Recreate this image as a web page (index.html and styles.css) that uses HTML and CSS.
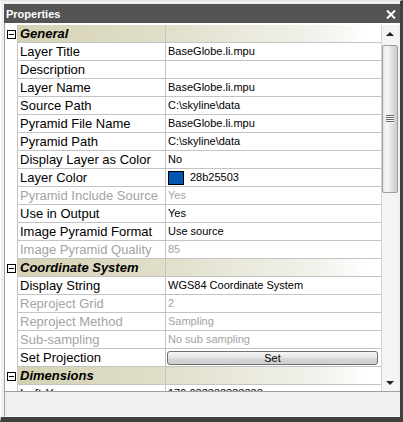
FILE: index.html
```html
<!DOCTYPE html>
<html>
<head>
<meta charset="utf-8">
<link rel="stylesheet" href="styles.css">
</head>
<body>
<div class="window">
  <div class="titlebar">
    <span class="title">Properties</span>
    <svg class="close" width="10" height="9" viewBox="0 0 10 9"><path d="M1 0.5 L9 8.5 M9 0.5 L1 8.5" stroke="#fff" stroke-width="2" fill="none"/></svg>
  </div>
  <div class="grid">
    <div class="rows">
      <div class="row cat"><div class="gutter"><span class="toggle"></span></div><div class="label">General</div><div class="value"></div></div>
      <div class="row"><div class="gutter"></div><div class="label">Layer Title</div><div class="value">BaseGlobe.li.mpu</div></div>
      <div class="row"><div class="gutter"></div><div class="label">Description</div><div class="value"></div></div>
      <div class="row"><div class="gutter"></div><div class="label">Layer Name</div><div class="value">BaseGlobe.li.mpu</div></div>
      <div class="row"><div class="gutter"></div><div class="label">Source Path</div><div class="value">C:\skyline\data</div></div>
      <div class="row"><div class="gutter"></div><div class="label">Pyramid File Name</div><div class="value">BaseGlobe.li.mpu</div></div>
      <div class="row"><div class="gutter"></div><div class="label">Pyramid Path</div><div class="value">C:\skyline\data</div></div>
      <div class="row"><div class="gutter"></div><div class="label">Display Layer as Color</div><div class="value">No</div></div>
      <div class="row"><div class="gutter"></div><div class="label">Layer Color</div><div class="value"><span class="swatch"></span>28b25503</div></div>
      <div class="row dis"><div class="gutter"></div><div class="label">Pyramid Include Source</div><div class="value">Yes</div></div>
      <div class="row"><div class="gutter"></div><div class="label">Use in Output</div><div class="value">Yes</div></div>
      <div class="row"><div class="gutter"></div><div class="label">Image Pyramid Format</div><div class="value">Use source</div></div>
      <div class="row dis"><div class="gutter"></div><div class="label">Image Pyramid Quality</div><div class="value">85</div></div>
      <div class="row cat"><div class="gutter"><span class="toggle"></span></div><div class="label">Coordinate System</div><div class="value"></div></div>
      <div class="row"><div class="gutter"></div><div class="label">Display String</div><div class="value">WGS84 Coordinate System</div></div>
      <div class="row dis"><div class="gutter"></div><div class="label">Reproject Grid</div><div class="value">2</div></div>
      <div class="row dis"><div class="gutter"></div><div class="label">Reproject Method</div><div class="value">Sampling</div></div>
      <div class="row dis"><div class="gutter"></div><div class="label">Sub-sampling</div><div class="value">No sub sampling</div></div>
      <div class="row"><div class="gutter"></div><div class="label">Set Projection</div><div class="value btncell"><span class="btn">Set</span></div></div>
      <div class="row cat"><div class="gutter"><span class="toggle"></span></div><div class="label">Dimensions</div><div class="value"></div></div>
      <div class="row"><div class="gutter"></div><div class="label">Left X</div><div class="value">179.033333333333</div></div>
    </div>
    <div class="scrollbar">
      <div class="arrow up"><span class="tri-up"></span></div>
      <div class="track"><div class="thumb"><span class="grip"></span></div></div>
      <div class="arrow down"><span class="tri-down"></span></div>
    </div>
    <div class="edge"></div>
  </div>
  <div class="desc"></div>
</div>
</body>
</html>
```

FILE: styles.css
```css
html, body {
  margin: 0;
  padding: 0;
  background: #f0f0f0;
}
.window {
  width: 403px;
  height: 422px;
  box-sizing: border-box;
  background: #f0f0f0;
  border-top: 1px solid #e4e4e4;
  border-left: 1px solid #ffffff;
  border-right: 3px solid #404040;
  border-bottom: 5px solid #404040;
  padding: 3px 0 0 3px;
  display: flex;
  flex-direction: column;
  font-family: "Liberation Sans", Arial, sans-serif;
}
.titlebar {
  height: 19px;
  flex: none;
  background: #545454;
  display: flex;
  align-items: center;
  justify-content: space-between;
  padding: 0 4px 0 2px;
}
.title {
  color: #fff;
  font-weight: bold;
  font-size: 11px;
}
.close {
  display: block;
  margin-top: 1px;
}
.grid {
  height: 369px;
  flex: none;
  box-sizing: border-box;
  border-left: 1px solid #a0a0a0;
  border-bottom: 1px solid #a0a0a0;
  padding-top: 2px;
  background: #fff;
  display: flex;
}
.rows {
  width: 376px;
  overflow: hidden;
  background: #fff;
}
.row {
  display: grid;
  grid-template-columns: 12px 148px 216px;
  height: 18px;
}
.gutter {
  background: #fff;
  display: flex;
  align-items: center;
  justify-content: center;
}
.label, .value {
  border-bottom: 1px solid #c4c4c4;
  border-left: 1px solid #c4c4c4;
  height: 17px;
  line-height: 17px;
  white-space: nowrap;
  overflow: hidden;
}
.label {
  font-size: 13px;
  color: #000;
  padding-left: 2px;
}
.value {
  font-size: 11px;
  color: #000;
  padding-left: 2px;
  display: flex;
  align-items: center;
}
.dis .label, .dis .value {
  color: #a3a3a3;
}
.cat {
  background: linear-gradient(to right, #d4d1b2 12px, #d9d6bb 60px, #e1dfca 165px, #e9e8da 230px, #f0f0e9 300px, #f8f8f5 340px, #ffffff 364px);
}
.cat .label {
  font-weight: bold;
  font-style: italic;
}
.toggle {
  width: 7px;
  height: 7px;
  border: 1px solid #000;
  background: #fff;
  position: relative;
  margin-left: 1px;
}
.toggle::after {
  content: "";
  position: absolute;
  left: 1px;
  top: 3px;
  width: 5px;
  height: 1px;
  background: #000;
}
.swatch {
  width: 14px;
  height: 12px;
  border: 1px solid #000;
  background: #0355b2;
  margin-right: 6px;
}
.btncell {
  padding-left: 1px;
}
.btn {
  display: block;
  width: 211px;
  height: 14px;
  box-sizing: border-box;
  border: 1px solid #6f6f6f;
  border-radius: 3px;
  background: linear-gradient(to bottom, #f6f6f6, #e4e4e4 50%, #d6d6d6 55%, #cfcfcf);
  text-align: center;
  line-height: 12px;
  font-size: 11px;
  color: #000;
}
.scrollbar {
  width: 17px;
  box-sizing: border-box;
  border-left: 1px solid #d4d4d4;
  background: #f4f4f4;
  display: flex;
  flex-direction: column;
}
.arrow {
  height: 17px;
  flex: none;
  display: flex;
  align-items: center;
  justify-content: center;
}
.tri-up {
  width: 0;
  height: 0;
  border-left: 4px solid transparent;
  border-right: 4px solid transparent;
  border-bottom: 4px solid #222;
}
.tri-down {
  width: 0;
  height: 0;
  border-left: 4px solid transparent;
  border-right: 4px solid transparent;
  border-top: 4px solid #222;
}
.track {
  flex: 1;
  padding-top: 3px;
}
.thumb {
  height: 148px;
  box-sizing: border-box;
  border: 1px solid #9c9c9c;
  border-radius: 2px;
  background: linear-gradient(to right, #e6e6e6, #f7f7f7 30%, #e2e2e2 60%, #cbcbcb);
  display: flex;
  align-items: center;
  justify-content: center;
}
.grip {
  width: 8px;
  height: 8px;
  background: repeating-linear-gradient(to bottom, #6a6a6a 0, #6a6a6a 1px, #f4f4f4 1px, #f4f4f4 2px);
}
.edge {
  width: 2px;
  background: #f0f0f0;
}
.desc {
  flex: 1;
  border-left: 1px solid #a0a0a0;
  border-bottom: 1px solid #fafafa;
  background: #f0f0f0;
}
```
